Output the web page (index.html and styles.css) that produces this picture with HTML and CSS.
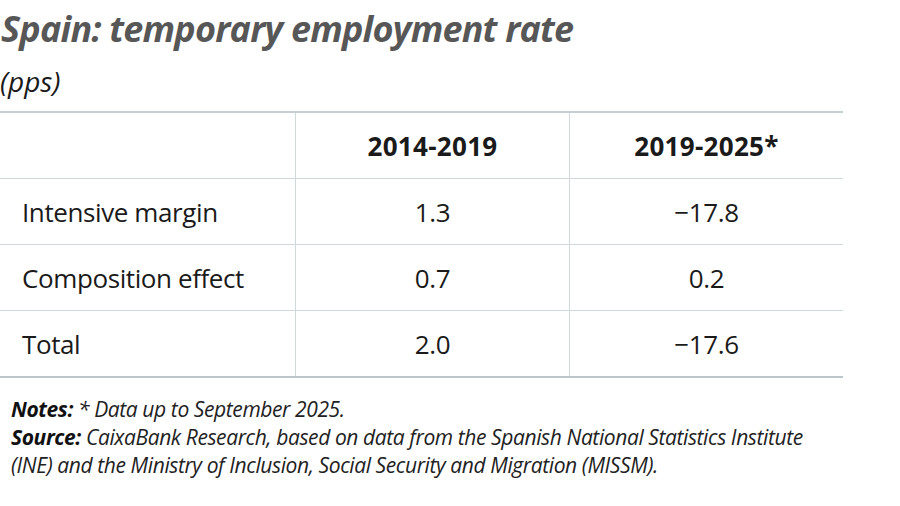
FILE: index.html
```html
<!doctype html>
<html lang="en">

    <head>
        <meta charset="UTF-8" />
        <title>Spain: temporary employment rate</title>
        <link rel="stylesheet" href="styles.css">
    </head>

    <body>
        <div class="chart">
            <h1 class="title">Spain: temporary employment rate</h1>
            <div class="unit">(pps)</div>
            <table class="data">
                <thead>
                    <tr>
                        <th class="label"></th>
                        <th>2014-2019</th>
                        <th>2019-2025*</th>
                    </tr>
                </thead>
                <tbody>
                    <tr>
                        <td class="label">Intensive margin</td>
                        <td>1.3</td>
                        <td>&minus;17.8</td>
                    </tr>
                    <tr>
                        <td class="label">Composition effect</td>
                        <td>0.7</td>
                        <td>0.2</td>
                    </tr>
                    <tr>
                        <td class="label">Total</td>
                        <td>2.0</td>
                        <td>&minus;17.6</td>
                    </tr>
                </tbody>
            </table>
            <div class="notes">
                <p><b>Notes:</b> * Data up to September 2025.</p>
                <p><b>Source:</b> CaixaBank Research, based on data from the Spanish National Statistics Institute<br>(INE) and the Ministry of Inclusion, Social Security and Migration (MISSM).</p>
            </div>
        </div>
    </body>

</html>
```

FILE: styles.css
```css
* {
    padding: 0px;
    margin: 0px;
}

html,
body {
    width: 100%;
    height: 100%;
    background: #fff;
    font-family: "Open Sans", "Noto Sans", sans-serif;
    color: #1a1a1a;
}

.chart {
    width: 843px;
}

.title {
    font-size: 36px;
    font-style: italic;
    font-weight: 700;
    color: #575757;
    letter-spacing: -0.8px;
    line-height: 44px;
    padding-top: 7px;
    padding-left: 1px;
}

.unit {
    font-size: 28px;
    font-style: italic;
    line-height: 34px;
    padding-top: 13px;
    height: 47px;
}

.data {
    width: 843px;
    border-collapse: collapse;
    border-top: 2px solid #c6cfd3;
    border-bottom: 2px solid #bcc5c9;
}

.data th,
.data td {
    height: 65px;
    font-size: 26px;
    letter-spacing: -0.4px;
    text-align: center;
    vertical-align: middle;
    border-top: 1px solid #d0d8db;
    border-left: 1px solid #d0d8db;
}

.data th {
    font-weight: 700;
    letter-spacing: 0.3px;
}

.data .label {
    width: 273px;
    text-align: left;
    padding-left: 22px;
    border-left: none;
}

.data th:last-child,
.data td:last-child {
    width: 273px;
}

.notes {
    padding-top: 17px;
    padding-left: 11px;
    font-size: 21px;
    font-style: italic;
    line-height: 28px;
    letter-spacing: -0.4px;
    color: #222;
    white-space: nowrap;
}

.notes b {
    font-weight: 700;
    color: #111;
}
```
